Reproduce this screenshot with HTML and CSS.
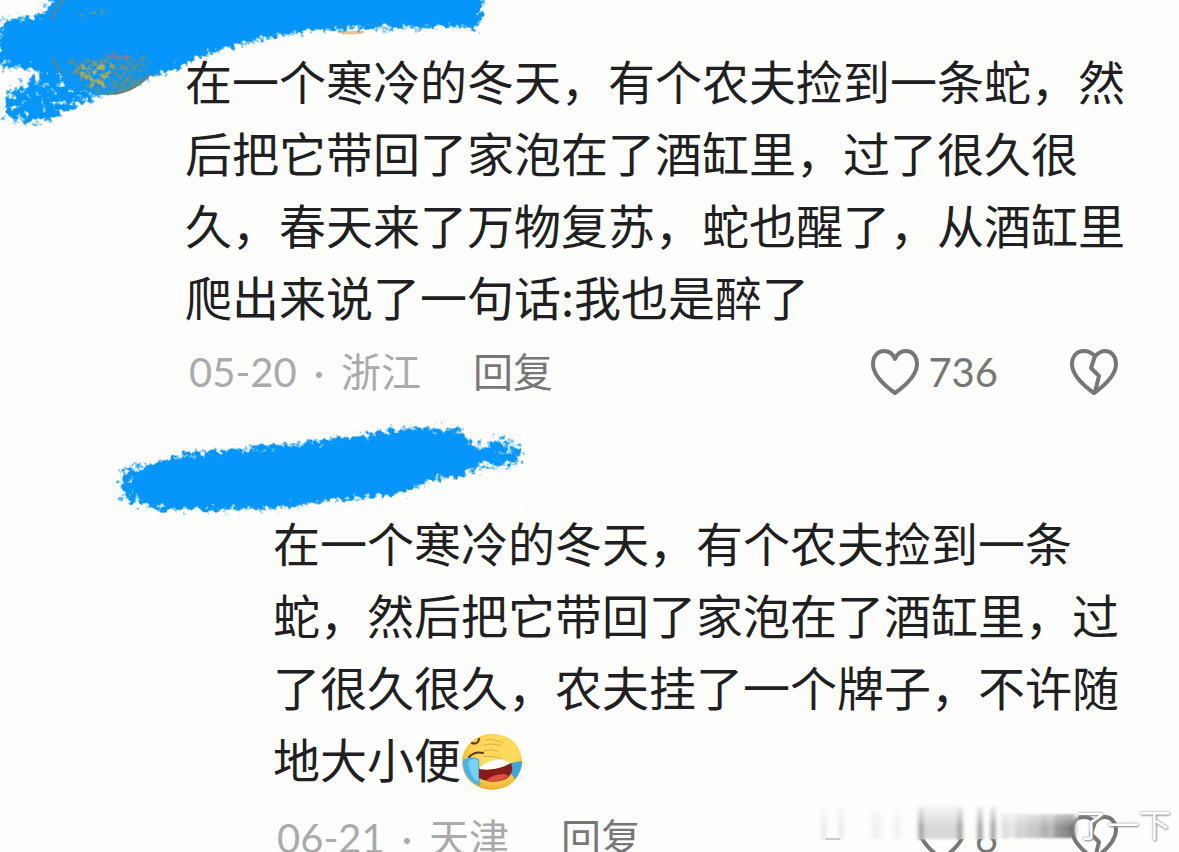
FILE: index.html
```html
<!DOCTYPE html>
<html lang="zh-CN">
<head>
<meta charset="utf-8">
<meta name="viewport" content="width=device-width, initial-scale=1">
<title>评论</title>
<link rel="stylesheet" href="styles.css">
</head>
<body>
<svg class="defs" aria-hidden="true">
  <defs>
    <filter id="brush" x="-10%" y="-20%" width="120%" height="140%" color-interpolation-filters="sRGB">
      <feGaussianBlur in="SourceAlpha" stdDeviation="6" result="soft"/>
      <feTurbulence type="fractalNoise" baseFrequency="0.17" numOctaves="3" seed="8" result="noise"/>
      <feComposite in="soft" in2="noise" operator="arithmetic" k1="0" k2="4" k3="4" k4="-3.5" result="grain"/>
      <feFlood flood-color="#0595fb"/>
      <feComposite in2="grain" operator="in"/>
      <feGaussianBlur stdDeviation="0.6"/>
    </filter>
    <filter id="speck" x="-10%" y="-10%" width="120%" height="120%" color-interpolation-filters="sRGB">
      <feGaussianBlur in="SourceGraphic" stdDeviation="4" result="soft"/>
      <feTurbulence type="fractalNoise" baseFrequency="0.2" numOctaves="3" seed="3" result="noise"/>
      <feComposite in="soft" in2="noise" operator="arithmetic" k1="0" k2="2" k3="4" k4="-3.6" result="grain"/>
      <feComposite in="soft" in2="grain" operator="in"/>
      <feGaussianBlur stdDeviation="0.5"/>
    </filter>
    <filter id="soften"><feGaussianBlur stdDeviation="2 1"/></filter>
    <symbol id="heart" viewBox="0 0 50 48">
      <path d="M25 45C18 40 3 29 3 16C3 8 8 3 14 3C19 3 23 6 25 11C27 6 31 3 36 3C42 3 47 8 47 16C47 29 32 40 25 45Z"/>
    </symbol>
    <symbol id="broken" viewBox="0 0 50 48">
      <path d="M25 45C18 40 3 29 3 16C3 8 8 3 15 3C20 3 23 5 26 8C29 5 32 3 36 3C42 3 47 8 47 16C47 29 32 40 25 45Z"/>
      <path d="M26 8L22 20L30 28L26 44"/>
    </symbol>
    <linearGradient id="fade" x1="0" y1="0" x2="0" y2="1">
      <stop offset="0" stop-color="#fdfdfc"/><stop offset="0.6" stop-color="#fdfdfc" stop-opacity="0"/>
    </linearGradient>
    <linearGradient id="trail"><stop offset="0" stop-color="#999" stop-opacity="0"/><stop offset="1" stop-color="#777"/></linearGradient>
    <radialGradient id="face" cx="0.55" cy="0.4" r="0.65">
      <stop offset="0" stop-color="#ffe478"/><stop offset="0.65" stop-color="#fbd04a"/><stop offset="1" stop-color="#eba62e"/>
    </radialGradient>
  </defs>
</svg>

<main class="thread">
  <article class="comment">
    <header class="author">
      <svg class="scribble-top" viewBox="0 0 500 140" aria-hidden="true">
        <circle cx="107" cy="41" r="54" fill="#4b93a0"/>
        <path d="M338 31h26v2q-13 3-26 0z" fill="#ecc58e"/>
        <g filter="url(#brush)">
          <path d="M60 -30H482V27Q400 27 310 31Q235 41 188 63Q170 72 150 78L60 66L0 68V20Q25 18 45 14Z"/>
          <path d="M150 78Q130 88 110 92Q75 108 50 123Q25 127 3 121L4 92Q16 86 26 82L40 66L60 60Z" fill-opacity="0.72"/>
        </g>
        <path d="M60 58Q90 48 156 54Q156 78 128 91Q85 101 66 76Z" fill="#698f7d" filter="url(#speck)"/>
        <path d="M76 64Q95 55 117 61L111 93Q89 92 76 79Z" fill="#b5ae55" filter="url(#speck)"/>
        <path d="M82 48Q105 42 128 50L142 66L108 60Z" fill="#91739e" filter="url(#speck)"/>
        <path d="M55 15Q80 0 118 8L111 18H58Z" fill="#6d9981" filter="url(#speck)"/>
        <path d="M53 19Q56 8 64 -1M53 58Q57 68 61 73M114 94Q136 91 151 73" fill="none" stroke="#6e8175" stroke-width="2"/>
      </svg>
    </header>
    <p class="text">在一个寒冷的冬天，有个农夫捡到一条蛇，然后把它带回了家泡在了酒缸里，过了很久很久，春天来了万物复苏，蛇也醒了，从酒缸里爬出来说了一句话:我也是醉了</p>
    <footer class="meta">
      <span class="when"><time>05-20</time><span>·</span><span>浙江</span></span>
      <button class="action reply-to" type="button">回复</button>
      <button class="action like" type="button" aria-label="赞 736"><svg class="icon"><use href="#heart"/></svg><span class="count">736</span></button>
      <button class="action" type="button" aria-label="不喜欢"><svg class="icon"><use href="#broken"/></svg></button>
    </footer>
  </article>

  <article class="comment reply">
    <header class="author">
      <svg class="scribble-reply" viewBox="0 0 440 100" aria-hidden="true">
        <g filter="url(#brush)">
          <path d="M40 48Q70 36 104 32Q170 27 220 21Q270 14 303 8Q340 8 362 10L380 36L368 55Q330 57 302 74Q230 80 180 88Q120 91 58 90Q46 86 40 76Z"/>
          <path d="M50 44L19 48L19 76L32 86L56 88ZM374 32L397 12L426 32L424 45L374 50Z" fill-opacity="0.75"/>
        </g>
      </svg>
    </header>
    <p class="text">在一个寒冷的冬天，有个农夫捡到一条蛇，然后把它带回了家泡在了酒缸里，过了很久很久，农夫挂了一个牌子，不许随地大小便<svg class="emoji" viewBox="0 0 62 60" role="img" aria-label="笑哭捂脸">
      <ellipse cx="31" cy="30" rx="30" ry="28" fill="url(#face)"/>
      <path d="M2 28Q9 23 18 27L19 54Q5 49 2 34Z" fill="#49b4e8"/>
      <path d="M7 30Q12 25 17 28L17 50Q9 45 7 30Z" fill="#79d2f2"/>
      <path d="M50 31L61 29Q61 39 54 47L50 42Z" fill="#3ca7dc"/>
      <path d="M18 37Q37 39 50 31Q54 41 45 47Q32 53 18 46Z" fill="#8a1b1c"/>
      <path d="M19 37Q37 39 49 31L43 27Q30 27 19 35Z" fill="#fff"/>
      <path d="M25 49Q31 42 43 42L48 44Q37 52 25 49Z" fill="#e0503f"/>
      <path d="M20 13Q20 4 30 4Q46 1 55 12Q63 23 55 29Q48 32 41 27Q31 24 23 24Z" fill="#fdd95c"/>
      <path d="M22 14Q30 10 40 14M24 8Q32 6 42 11M22 19Q30 17 37 19M22 24Q33 24 41 27" fill="none" stroke="#e3aa35" stroke-width="1"/>
      <path d="M8 25Q14 19 22 21M11 11Q17 13 18 7" fill="none" stroke="#59361d" stroke-width="2" stroke-linecap="round"/>
    </svg></p>
    <footer class="meta">
      <span class="when"><time>06-21</time><span>·</span><span>天津</span></span>
      <button class="action reply-to" type="button">回复</button>
      <button class="action like" type="button" aria-label="赞 6"><svg class="icon"><use href="#heart"/></svg><span class="count">6</span></button>
      <button class="action" type="button" aria-label="不喜欢"><svg class="icon"><use href="#broken"/></svg></button>
    </footer>
  </article>

  <div class="watermark">
    <svg class="smear" viewBox="0 0 260 42" aria-hidden="true">
      <rect x="5" y="0" width="245" height="37" fill="#fdfdfc"/>
      <g filter="url(#soften)">
        <path d="M5 4V37M22 4V37" stroke="#ddd" stroke-width="3"/>
        <path d="M53 8h9V37h-9zM75 8h6V37h-6z" fill="#f0f0f0"/>
        <rect x="102" y="4" width="39" height="33" fill="#d8d8d8"/>
        <path d="M102 4V38M141 4V38M161 4V38M174 4V38" stroke="#888" stroke-width="4"/>
        <rect x="176" y="12" width="80" height="24" fill="url(#trail)"/>
        <path d="M186 12V37M200 12V37M218 12V37M232 12V37" stroke="#ccc" stroke-width="3"/>
      </g>
      <rect width="260" height="42" fill="url(#fade)"/>
      <path d="M6 37H21" stroke="#ccc" stroke-width="2"/>
    </svg>
    <span class="watermark-text">了一下</span>
  </div>
</main>
</body>
</html>
```
FILE: styles.css
```css
* {
  box-sizing: border-box;
}

body {
  margin: 0;
  background: #fdfdfc;
  color: #202022;
  font-family: Lato, "Noto Sans CJK SC", sans-serif;
}

.defs {
  position: absolute;
  width: 0;
  height: 0;
}

.thread {
  position: relative;
  height: 100vh;
  overflow: hidden;
  padding: 0 50px 0 185px;
}

.author {
  height: 44px;
}

.reply {
  padding-left: 88px;
}

.reply .author {
  height: 94px;
}

.scribble-top,
.scribble-reply {
  position: absolute;
  z-index: 1;
  pointer-events: none;
}

.scribble-top {
  left: 0;
  top: 0;
  width: 500px;
}

.scribble-reply {
  left: 100px;
  top: 420px;
  width: 440px;
}

.text {
  margin: 0;
  font-family: "Noto Sans CJK SC", sans-serif;
  font-size: 47px;
  line-height: 72px;
}

.reply .text {
  margin-bottom: 4px;
}

.emoji {
  width: 62px;
  height: 60px;
  vertical-align: -14px;
}

.meta {
  display: flex;
  align-items: center;
  height: 80px;
  padding-right: 10px;
  font-size: 40px;
  line-height: 48px;
  color: #777;
}

.when {
  display: flex;
  gap: 17px;
  padding-left: 4px;
  color: #aaa;
}

.action {
  display: flex;
  align-items: center;
  gap: 8px;
  padding: 0;
  border: 0;
  background: none;
  color: inherit;
  font: inherit;
}

.reply-to {
  margin-left: 52px;
}

.like {
  margin-left: auto;
  margin-right: 71px;
}

.icon {
  width: 50px;
  height: 48px;
  fill: none;
  stroke: #777;
  stroke-width: 4;
  stroke-linejoin: round;
  stroke-linecap: round;
}

.watermark {
  position: absolute;
  z-index: 2;
  right: 8px;
  top: 802px;
  display: flex;
  align-items: center;
}

.smear {
  width: 260px;
  height: 42px;
  margin-right: -4px;
}

.watermark-text {
  color: #fff;
  font-family: "Noto Sans CJK SC", sans-serif;
  font-size: 32px;
  line-height: 42px;
  text-shadow: 0 0 2px #777, 1px 1px 2px #999;
}
```
